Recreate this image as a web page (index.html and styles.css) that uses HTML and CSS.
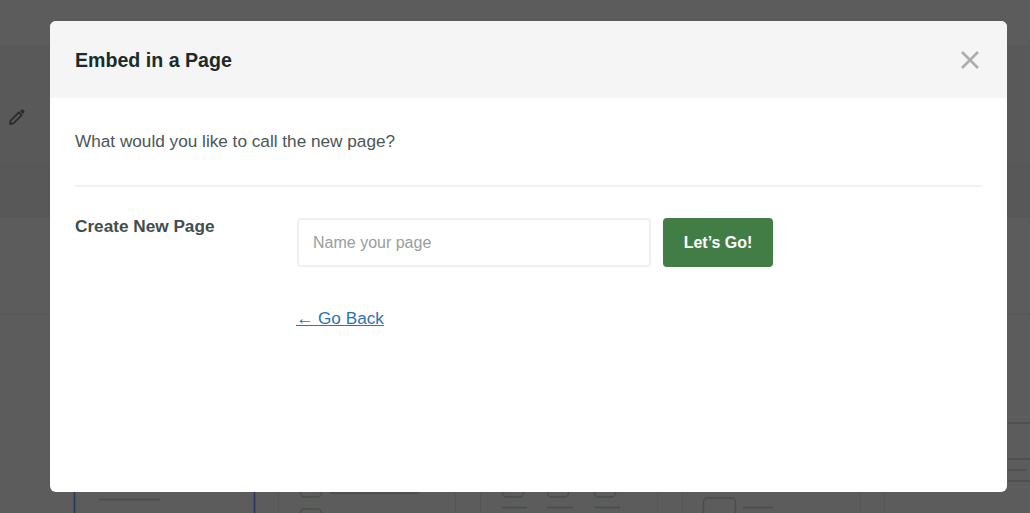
FILE: index.html
```html
<!DOCTYPE html>
<html lang="en">
<head>
    <meta charset="UTF-8">
    <title>Embed in a Page</title>
    <link rel="stylesheet" href="styles.css">
</head>
<body>
    <div class="page">
        <div class="band band-strip"></div>
        <div class="band band-top">
            <svg class="pencil" width="18" height="18" viewBox="0 0 18 18">
                <path d="M2.6 12.6 10.8 4.4 13.6 7.2 5.4 15.4 2 16Z" fill="none" stroke="#2b2b2b" stroke-width="1.8" stroke-linejoin="round"/>
                <path d="M12 3.2 13.4 1.8a1.2 1.2 0 0 1 1.7 0l1.1 1.1a1.2 1.2 0 0 1 0 1.7L14.8 6Z" fill="#2b2b2b"/>
            </svg>
        </div>
        <div class="band band-tabs"></div>
        <div class="band band-mid"></div>
        <div class="band band-low">
            <svg class="canvas" width="1030" height="198" viewBox="0 315 1030 198">
                <g stroke="#565656" stroke-width="1">
                    <path d="M278.5 492V513M455.5 492V513M480.5 492V513M657.5 492V513M682.5 492V513M860.5 492V513M884.5 492V513"/>
                </g>
                <g stroke="#26365f" stroke-width="1.6">
                    <path d="M74.5 492V513M254.5 492V513"/>
                </g>
                <g fill="none" stroke="#464e46" stroke-width="1.4">
                    <path d="M99 499.5H160M330 493H419"/>
                    <path d="M300.5 490v3a4 4 0 0 0 4 4h13a4 4 0 0 0 4-4v-3"/>
                    <path d="M300.5 514v-1a4 4 0 0 1 4-4h13a4 4 0 0 1 4 4v1"/>
                    <path d="M502.5 490v3a4 4 0 0 0 4 4h13a4 4 0 0 0 4-4v-3"/>
                    <path d="M547.5 490v3a4 4 0 0 0 4 4h13a4 4 0 0 0 4-4v-3"/>
                    <path d="M594.5 490v3a4 4 0 0 0 4 4h13a4 4 0 0 0 4-4v-3"/>
                    <path d="M502 507.5H527M547 507.5H573M594 507.5H620M743 507.5H773"/>
                    <path d="M703.5 514V502a4 4 0 0 1 4-4h24a4 4 0 0 1 4 4v12"/>
                    <path d="M1008 423H1030M1008 459H1030M1008 470H1026M1008 481H1030"/>
                </g>
            </svg>
        </div>
    </div>

    <div class="modal">
        <div class="modal-head">
            <h2>Embed in a Page</h2>
            <svg class="close" width="20" height="20" viewBox="0 0 20 20">
                <path d="M2 2 18 18M18 2 2 18" stroke="#adadad" stroke-width="2.6"/>
            </svg>
        </div>
        <div class="modal-body">
            <p class="question">What would you like to call the new page?</p>
            <div class="form-row">
                <label class="form-label" for="pagename">Create New Page</label>
                <div class="form-fields">
                    <div class="field-line">
                        <input id="pagename" class="name-input" type="text" placeholder="Name your page">
                        <button class="go-btn" type="button">Let’s Go!</button>
                    </div>
                    <a class="back-link" href="javascript:;">← Go Back</a>
                </div>
            </div>
        </div>
    </div>
</body>
</html>
```

FILE: styles.css
```css
*{
    margin: 0;
    padding: 0;
    box-sizing: border-box;
}
html,body{
    height: 100%;
    overflow: hidden;
}
body{
    font-family: "Liberation Sans", Arial, sans-serif;
    background-color: #5c5c5c;
}
.page{
    display: flex;
    flex-direction: column;
    height: 513px;
}
.band{
    flex: none;
}
.band-strip{
    height: 45px;
    background-color: #5c5c5c;
}
.band-top{
    height: 120px;
    background-color: #595959;
    padding: 63px 0 0 8px;
    border-bottom: 1px solid #565656;
}
.pencil{
    display: block;
}
.band-tabs{
    height: 53px;
    background-color: #585858;
}
.band-mid{
    height: 97px;
    background-color: #5c5c5c;
    border-bottom: 1px solid #575757;
}
.band-low{
    height: 198px;
    background-color: #5c5c5c;
}
.canvas{
    display: block;
}
.modal{
    position: absolute;
    left: 50px;
    top: 21px;
    width: 957px;
    height: 471px;
    background-color: #fff;
    border-radius: 6px;
    overflow: hidden;
}
.modal-head{
    display: flex;
    justify-content: space-between;
    align-items: center;
    height: 77px;
    padding: 0 27px 0 25px;
    background-color: #f5f5f5;
}
.modal-head h2{
    padding-top: 1px;
    font-size: 19.6px;
    font-weight: bold;
    color: #1a2b2b;
}
.modal-body{
    padding: 0 25px;
}
.question{
    height: 89px;
    padding-top: 32px;
    font-size: 17.2px;
    line-height: 22px;
    color: #4a5556;
    border-bottom: 2px solid #f1f1f1;
}
.form-row{
    display: flex;
    padding-top: 31px;
}
.form-label{
    width: 222px;
    margin-top: -1px;
    font-size: 17.2px;
    line-height: 18px;
    font-weight: bold;
    color: #434d4e;
}
.form-fields{
    display: flex;
    flex-direction: column;
    align-items: flex-start;
}
.field-line{
    display: flex;
    gap: 12px;
}
.name-input{
    width: 354px;
    height: 49px;
    padding: 1px 14px 0;
    font-family: inherit;
    font-size: 16px;
    color: #444;
    background-color: #fff;
    border: 2px solid #f0f0f0;
    border-radius: 4px;
}
.name-input::placeholder{
    color: #999d9e;
    opacity: 1;
}
.go-btn{
    width: 110px;
    height: 49px;
    padding-top: 1px;
    font-family: inherit;
    font-size: 16px;
    font-weight: bold;
    color: #fff;
    background-color: #437d46;
    border: none;
    border-radius: 4px;
}
.back-link{
    margin-top: 41px;
    margin-left: -1px;
    font-size: 17.2px;
    line-height: 20px;
    color: #2e73b0;
}
```
